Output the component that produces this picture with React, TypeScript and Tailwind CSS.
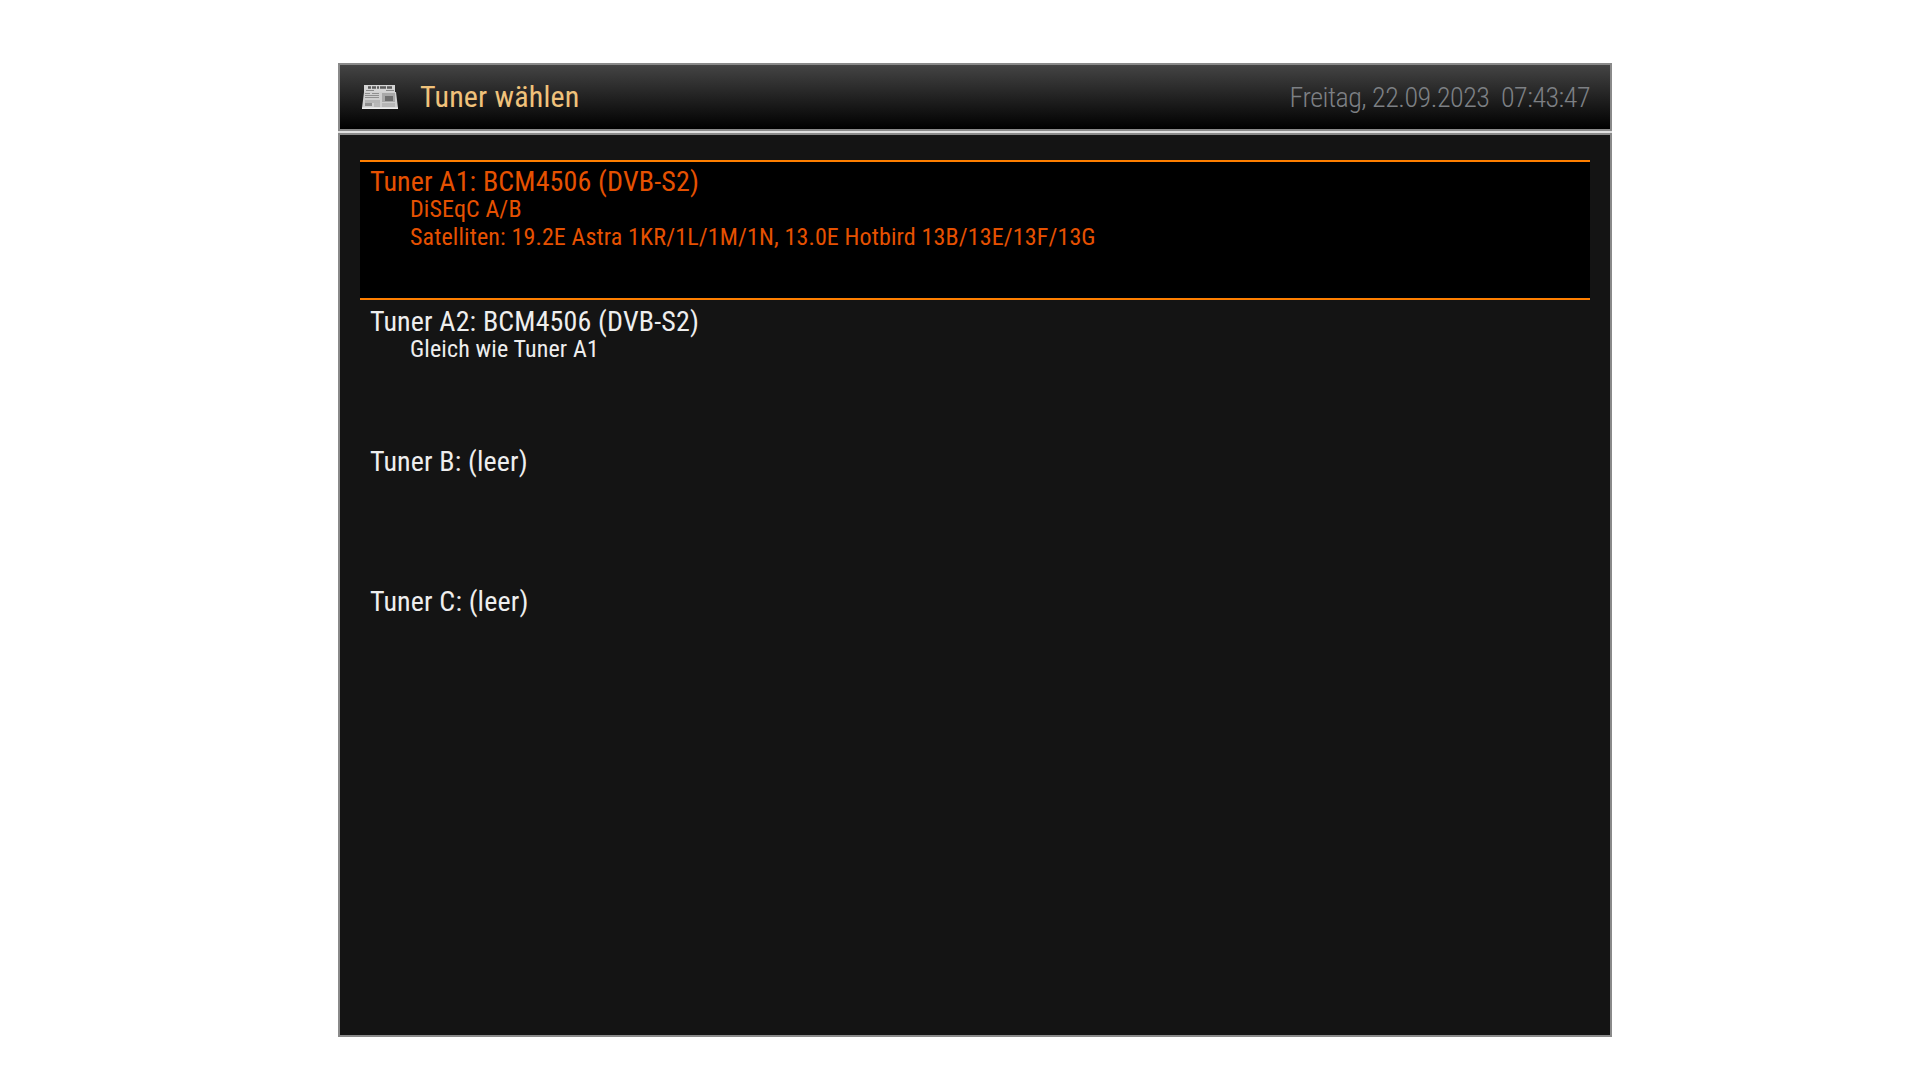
const font = "font-['Roboto_Condensed','Roboto',sans-serif] [font-stretch:75%]";

function NewsIcon() {
  return (
    <svg width="36" height="24" viewBox="0 0 36 24" className="block">
      <path d="M2 0h31v12H2z" fill="#d4d4d4" />
      <path d="M6 2.5h3M10 2.5h4M15 2.5h2M18 2.5h6M25 2.5h5" stroke="#5a5a5a" strokeWidth="2.5" />
      <path d="M4 5.5h8M24 5.5h8" stroke="#8a8a8a" strokeWidth="1" />
      <path d="M2 7h32l2 16H0z" fill="#cfcfcf" />
      <path d="M3 8.5h5M10 8.5h7M3 10.5h14M3 12.5h14" stroke="#8f8f8f" strokeWidth="1" />
      <path d="M20 8h13v9H20z" fill="#a8a8a8" />
      <path d="M23 11h8v5h-8z" fill="#6e6e6e" />
      <path d="M3 15h15v3H3z" fill="#b5b5b5" />
      <path d="M3 18h7v3H3z" fill="#8e8e8e" />
      <path d="M12 19h6M12 21h6M20 19h13M20 21h13" stroke="#a0a0a0" strokeWidth="1" />
      <path d="M0 22.5h36V24H0z" fill="#efefef" />
    </svg>
  );
}

const rows = [
  { title: 'Tuner A1: BCM4506 (DVB-S2)', lines: ['DiSEqC A/B', 'Satelliten: 19.2E Astra 1KR/1L/1M/1N, 13.0E Hotbird 13B/13E/13F/13G'], active: true },
  { title: 'Tuner A2: BCM4506 (DVB-S2)', lines: ['Gleich wie Tuner A1'] },
  { title: 'Tuner B: (leer)', lines: [] },
  { title: 'Tuner C: (leer)', lines: [] },
];

export default function App() {
  return (
    <div className={`min-h-[1080px] bg-white pt-[63px] pl-[338px] ${font}`}>
      <div className="w-[1274px]">
        <header className="h-[68px] border-2 border-[#8a8a8a] bg-linear-to-b/srgb from-[#444444] to-[#000000] flex items-center pl-[22px] pr-[20px]">
          <NewsIcon />
          <span className="ml-[22px] text-[30px] tracking-[0.2px] text-[#f0c27b] relative -top-[1px]">Tuner wählen</span>
          <span className="ml-auto text-[28px] leading-[30px] pt-[2px] font-light tracking-[-0.5px] text-[#7d8084] whitespace-pre">Freitag, 22.09.2023  07:43:47</span>
        </header>
        <div className="h-[2px] bg-[#e0e0e0]" />
        <main className="h-[904px] border-2 border-[#8a8a8a] bg-[#141414] pt-[25px] pl-[20px] pr-[20px]">
          {rows.map((row) => (
            <div key={row.title} className={`h-[140px] pl-[10px] ${row.active ? 'bg-black border-y-2 border-[#ff7f00] text-[#e65100]' : 'text-[#eeeeee] pt-[2px]'}`}>
              <div className="text-[28px] tracking-[0.15px] leading-[28px] pt-[6px] mb-[-1px]">{row.title}</div>
              {row.lines.map((line) => (
                <div key={line} className="pl-[40px] text-[24px] tracking-[0.13px] leading-[28px]">{line}</div>
              ))}
            </div>
          ))}
        </main>
      </div>
    </div>
  );
}
